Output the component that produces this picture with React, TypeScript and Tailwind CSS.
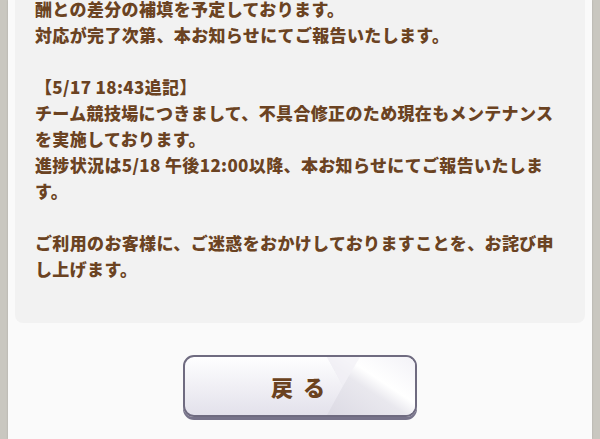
const LINES: string[] = [
  "酬との差分の補填を予定しております。",
  "対応が完了次第、本お知らせにてご報告いたします。",
  "",
  "【5/17 18:43追記】",
  "チーム競技場につきまして、不具合修正のため現在もメンテナンス",
  "を実施しております。",
  "進捗状況は5/18 午後12:00以降、本お知らせにてご報告いたしま",
  "す。",
  "",
  "ご利用のお客様に、ご迷惑をおかけしておりますことを、お詫び申",
  "し上げます。",
];

function BackButton() {
  return (
    <button className="relative h-[62px] w-[234px] overflow-hidden rounded-[11px] border-2 border-[#6f6b80] bg-gradient-to-b from-[#fefeff] to-[#e3e1eb] shadow-[0_3px_0_#77738a]">
      <svg className="absolute inset-0 h-full w-full" viewBox="0 0 230 58" preserveAspectRatio="none">
        <defs>
          <linearGradient id="shine" x1="0" y1="1" x2="1" y2="0">
            <stop offset="0" stopColor="#dcdae4" />
            <stop offset="0.45" stopColor="#e9e8ee" />
            <stop offset="0.6" stopColor="#ffffff" />
            <stop offset="1" stopColor="#f3f2f7" />
          </linearGradient>
        </defs>
        <polygon points="142,0 230,0 230,58 142,58 158,29" fill="url(#shine)" />
        <polygon points="142,0 175,0 158,29" fill="#f2f1f6" opacity="0.8" />
      </svg>
      <span className="relative block pl-[6px] text-[22px] font-black tracking-[10px] text-[#6b4220]">戻る</span>
    </button>
  );
}

export default function App() {
  return (
    <div
      className="flex h-[439px] w-[600px] overflow-hidden bg-[#c9c7c0]"
      style={{ fontFamily: '"Noto Sans CJK JP", "Noto Sans", sans-serif' }}
    >
      <div className="mx-[8px] flex flex-1 flex-col bg-[#fafafa] shadow-[0_0_2px_rgba(0,0,0,0.15)]">
        <div className="mx-[7px] h-[323px] overflow-hidden rounded-b-[8px] bg-[#f2f2f2] px-[20px]">
          <div className="mt-[-4px] text-[17px] font-black leading-[26px] tracking-[0.35px] text-[#6b4322]">
            {LINES.map((line, i) => (
              <div key={i} className="h-[26px] whitespace-nowrap">
                {line}
              </div>
            ))}
          </div>
        </div>
        <div className="flex justify-center pt-[32px]">
          <BackButton />
        </div>
      </div>
    </div>
  );
}
